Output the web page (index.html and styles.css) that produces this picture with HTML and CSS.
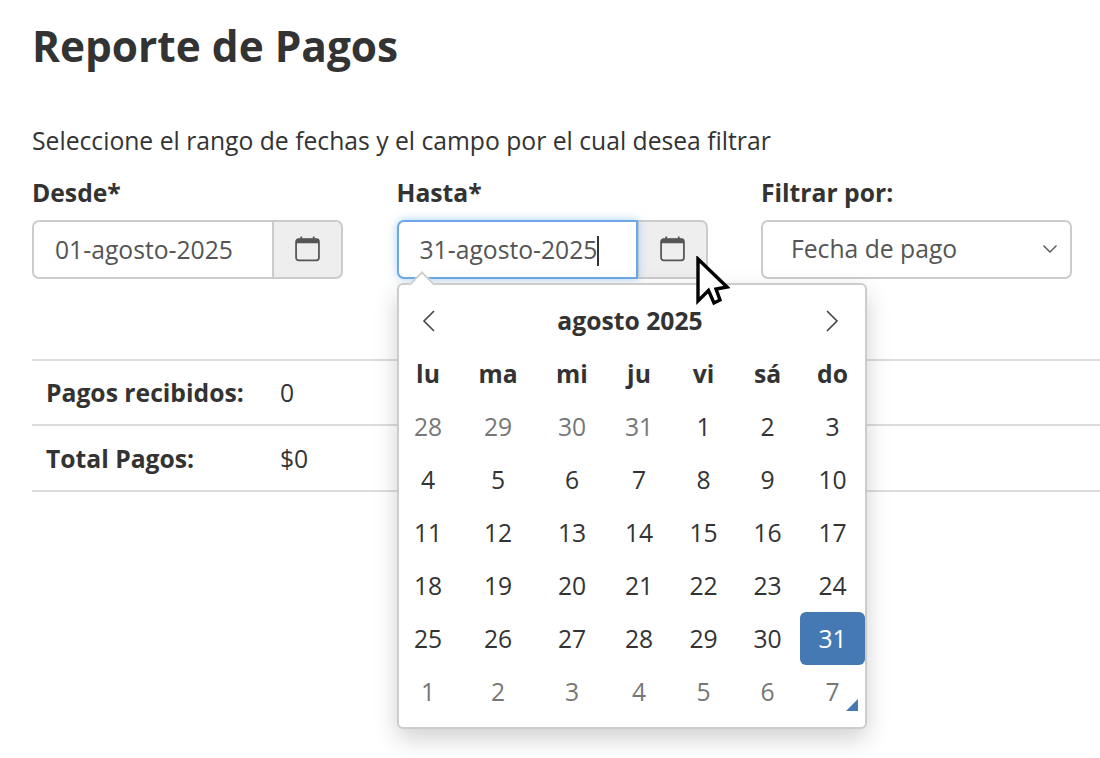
FILE: index.html
```html
<!DOCTYPE html>
<html lang="es">
<head>
<meta charset="utf-8">
<title>Reporte de Pagos</title>
<link rel="stylesheet" href="styles.css">
</head>
<body>
<main class="page">
  <h1 class="title">Reporte de Pagos</h1>
  <p class="intro">Seleccione el rango de fechas y el campo por el cual desea filtrar</p>
  <div class="filters">
    <div class="field">
      <label class="label">Desde*</label>
      <div class="group">
        <div class="input">01-agosto-2025</div>
        <div class="addon">
          <svg class="cal" viewBox="0 0 26 26"><rect x="2" y="4" width="22" height="20.500" rx="2.500" fill="none" stroke="currentColor" stroke-width="1.700"/><path d="M2 5.500a2 2 0 0 1 2-2h18a2 2 0 0 1 2 2v2.500H2z" fill="currentColor"/><path d="M7 1.500v2.500M19 1.500v2.500" stroke="currentColor" stroke-width="1.700"/></svg>
        </div>
      </div>
    </div>
    <div class="field field-open">
      <label class="label">Hasta*</label>
      <div class="group">
        <div class="input input-focus">31-agosto-2025<span class="caret"></span></div>
        <div class="addon">
          <svg class="cal" viewBox="0 0 26 26"><rect x="2" y="4" width="22" height="20.500" rx="2.500" fill="none" stroke="currentColor" stroke-width="1.700"/><path d="M2 5.500a2 2 0 0 1 2-2h18a2 2 0 0 1 2 2v2.500H2z" fill="currentColor"/><path d="M7 1.500v2.500M19 1.500v2.500" stroke="currentColor" stroke-width="1.700"/></svg>
        </div>
      </div>
      <div class="popup">
        <span class="arrow"></span>
        <div class="popup-head">
          <svg class="nav" viewBox="0 0 14 24"><path d="M12 2 2 12l10 10" fill="none" stroke="currentColor" stroke-width="1.600"/></svg>
          <span class="month">agosto 2025</span>
          <svg class="nav" viewBox="0 0 14 24"><path d="m2 2 10 10L2 22" fill="none" stroke="currentColor" stroke-width="1.600"/></svg>
        </div>
        <table class="days">
          <colgroup><col class="c1"><col class="c2"><col class="c3"><col class="c4"><col class="c5"><col class="c6"><col class="c7"></colgroup>
          <thead><tr><th>lu</th><th>ma</th><th>mi</th><th>ju</th><th>vi</th><th>sá</th><th>do</th></tr></thead>
          <tbody>
            <tr><td class="off">28</td><td class="off">29</td><td class="off">30</td><td class="off">31</td><td>1</td><td>2</td><td>3</td></tr>
            <tr><td>4</td><td>5</td><td>6</td><td>7</td><td>8</td><td>9</td><td>10</td></tr>
            <tr><td>11</td><td>12</td><td>13</td><td>14</td><td>15</td><td>16</td><td>17</td></tr>
            <tr><td>18</td><td>19</td><td>20</td><td>21</td><td>22</td><td>23</td><td>24</td></tr>
            <tr><td>25</td><td>26</td><td>27</td><td>28</td><td>29</td><td>30</td><td class="active">31</td></tr>
            <tr><td class="off">1</td><td class="off">2</td><td class="off">3</td><td class="off">4</td><td class="off">5</td><td class="off">6</td><td class="off today">7</td></tr>
          </tbody>
        </table>
      </div>
      <svg class="cursor" viewBox="0 0 36 52"><path d="M4 3v42l10.500-10.500L20 47l6-3-4-11 11-2z" fill="#fff" stroke="#000" stroke-width="3.400" stroke-linejoin="miter"/></svg>
    </div>
    <div class="field">
      <label class="label">Filtrar por:</label>
      <div class="select">
        <span>Fecha de pago</span>
        <svg class="chev" viewBox="0 0 16 10"><path d="m1.500 1.500 6.500 6.500 6.500-6.500" fill="none" stroke="currentColor" stroke-width="1.400"/></svg>
      </div>
    </div>
  </div>
  <section class="summary">
    <div class="row"><strong class="key">Pagos recibidos:</strong><span>0</span></div>
    <div class="row"><strong class="key">Total Pagos:</strong><span>$0</span></div>
  </section>
</main>
</body>
</html>
```
FILE: styles.css
```css
* { box-sizing: border-box; }
html, body { margin: 0; height: 100%; overflow: hidden; background: #fff; }
body { font-family: "Open Sans", sans-serif; color: #333; font-size: 24.7px; line-height: 1.5; }
.page { padding: 20px 0 0 32px; }
.title { margin: 0; font-size: 42.4px; font-weight: 700; line-height: 52px; color: #333; }
.intro { margin: 51px 0 0; height: 35px; line-height: 35px; }
.filters { display: flex; gap: 53.5px; margin-top: 16px; height: 184.500px; }
.field { position: relative; width: 311px; }
.label { display: block; font-weight: 700; line-height: 35px; height: 44.500px; margin-top: 1px; }
.group { display: flex; height: 59px; }
.input { flex: 1; border: 2px solid #ccc; border-right: 0; border-radius: 7px 0 0 7px; padding: 0 0 0 21px; line-height: 55px; color: #555; background: #fff; white-space: nowrap; }
.input-focus { border: 2px solid #6ea8e6; border-radius: 7px 0 0 7px; box-shadow: 0 0 10px rgba(102,175,233,.55); position: relative; z-index: 1; margin-right: -1px; }
.caret { display: inline-block; width: 1.500px; height: 30px; background: #333; vertical-align: -7px; }
.addon { width: 71px; display: flex; align-items: center; justify-content: center; background: #eee; border: 2px solid #ccc; border-radius: 0 7px 7px 0; color: #555; }
.cal { width: 27px; height: 27px; display: block; margin-bottom: 1px; }
.select { height: 59px; border: 2px solid #ccc; border-radius: 7px; padding: 0 12px 0 28px; display: flex; align-items: center; justify-content: space-between; color: #555; background: #fff; }
.chev { width: 16px; height: 10px; color: #555; }
.popup { position: absolute; left: .5px; top: 109px; width: 470px; height: 446px; background: #fff; border: 2px solid #ccc; border-radius: 6px; box-shadow: 0 10px 24px rgba(0,0,0,.18); z-index: 2; }
.arrow { position: absolute; left: 13px; top: -11px; width: 20px; height: 20px; background: #fff; border-top: 2px solid #ccc; border-left: 2px solid #ccc; transform: rotate(45deg) scale(.9); }
.popup-head { position: relative; display: flex; align-items: center; justify-content: space-between; height: 62px; padding: 10px 26px 0 23px; }
.nav { width: 14px; height: 24px; color: #444; }
.month { font-weight: 700; margin-left: -1px; }
.days { border-collapse: collapse; table-layout: fixed; width: 467px; margin-left: -1px; }
.c1 { width: 60px; } .c2 { width: 80px; } .c3 { width: 68px; } .c4 { width: 66px; }
.c5 { width: 63px; } .c6 { width: 65px; } .c7 { width: 65px; }
.days th, .days td { height: 53px; padding: 0; text-align: center; font-weight: 400; position: relative; }
.days th { font-weight: 700; }
.days .off { color: #777; }
.days .active { background: #4579b4; color: #fff; border-radius: 6px; }
.today::after { content: ""; position: absolute; right: 7px; bottom: 7px; width: 0; height: 0; border-left: 12px solid transparent; border-bottom: 12px solid #4579b4; }
.cursor { position: absolute; left: 297px; top: 82px; width: 36px; height: 52px; z-index: 3; }
.summary { border-top: 2px solid #ddd; }
.row { display: flex; height: 65.500px; align-items: center; padding: 1px 0 0 14px; border-bottom: 2px solid #ddd; }
.key { width: 234px; font-weight: 700; }
```
